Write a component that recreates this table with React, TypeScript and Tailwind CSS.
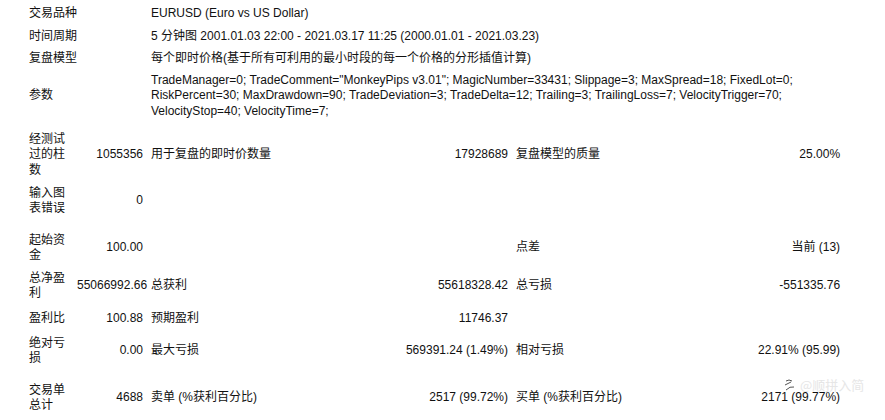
import React from 'react';

type Row = {
  h: number;
  cells: { text?: string; span?: number; right?: boolean }[];
};

const rows: Row[] = [
  { h: 22, cells: [{ text: '交易品种', span: 2 }, { text: 'EURUSD (Euro vs US Dollar)', span: 4 }] },
  { h: 23, cells: [{ text: '时间周期', span: 2 }, { text: '5 分钟图 2001.01.03 22:00 - 2021.03.17 11:25 (2000.01.01 - 2021.03.23)', span: 4 }] },
  { h: 22, cells: [{ text: '复盘模型', span: 2 }, { text: '每个即时价格(基于所有可利用的最小时段的每一个价格的分形插值计算)', span: 4 }] },
  {
    h: 52,
    cells: [
      { text: '参数', span: 2 },
      {
        text: 'TradeManager=0; TradeComment="MonkeyPips v3.01"; MagicNumber=33431; Slippage=3; MaxSpread=18; FixedLot=0; RiskPercent=30; MaxDrawdown=90; TradeDeviation=3; TradeDelta=12; Trailing=3; TrailingLoss=7; VelocityTrigger=70; VelocityStop=40; VelocityTime=7;',
        span: 4,
      },
    ],
  },
  { h: 6, cells: [] },
  { h: 54, cells: [{ text: '经测试过的柱数' }, { text: '1055356', right: true }, { text: '用于复盘的即时价数量' }, { text: '17928689', right: true }, { text: '复盘模型的质量' }, { text: '25.00%', right: true }] },
  { h: 38, cells: [{ text: '输入图表错误' }, { text: '0', right: true }, {}, {}, {}, {}] },
  { h: 9, cells: [] },
  { h: 38, cells: [{ text: '起始资金' }, { text: '100.00', right: true }, {}, {}, { text: '点差' }, { text: '当前 (13)', right: true }] },
  { h: 38, cells: [{ text: '总净盈利' }, { text: '55066992.66', right: true }, { text: '总获利' }, { text: '55618328.42', right: true }, { text: '总亏损' }, { text: '-551335.76', right: true }] },
  { h: 27, cells: [{ text: '盈利比' }, { text: '100.88', right: true }, { text: '预期盈利' }, { text: '11746.37', right: true }, {}, {}] },
  { h: 38, cells: [{ text: '绝对亏损' }, { text: '0.00', right: true }, { text: '最大亏损' }, { text: '569391.24 (1.49%)', right: true }, { text: '相对亏损' }, { text: '22.91% (95.99)', right: true }] },
  { h: 9, cells: [] },
  { h: 38, cells: [{ text: '交易单总计' }, { text: '4688', right: true }, { text: '卖单 (%获利百分比)' }, { text: '2517 (99.72%)', right: true }, { text: '买单 (%获利百分比)' }, { text: '2171 (99.77%)', right: true }] },
];

export default function App() {
  return (
    <div className="relative h-[420px] w-[885px] overflow-hidden bg-white pt-[3px] pl-[25px] text-[12px] leading-[15.5px] text-[#111] [font-family:'Liberation_Sans','Noto_Sans_CJK_SC',sans-serif]">
      <table className="w-[819px] table-fixed border-collapse">
        <colgroup>
          <col className="w-[48px]" />
          <col className="w-[74px]" />
          <col className="w-[150px]" />
          <col className="w-[215px]" />
          <col className="w-[150px]" />
          <col className="w-[182px]" />
        </colgroup>
        <tbody>
          {rows.map((row, i) => (
            <tr key={i} style={{ height: row.h }}>
              {row.cells.length === 0 ? (
                <td colSpan={6} className="p-0" />
              ) : (
                row.cells.map((c, j) => (
                  <td
                    key={j}
                    colSpan={c.span ?? 1}
                    className={`px-[4px] py-0 align-middle ${c.right ? 'text-right whitespace-nowrap' : 'text-left'}`}
                  >
                    {c.text}
                  </td>
                ))
              )}
            </tr>
          ))}
        </tbody>
      </table>

      {/* watermark */}
      <div className="absolute left-[783px] top-[377px] flex items-center gap-[3px] text-[13px] text-[#e6e6e6]">
        <svg width="14" height="14" viewBox="0 0 14 14" className="text-[#555]">
          <path d="M3 3 Q6 1 9 3 M2 7 L8 4 M3 12 Q7 8 11 9" fill="none" stroke="currentColor" strokeWidth="1" />
        </svg>
        <span className="[font-family:'Noto_Sans_CJK_SC',sans-serif]">@顺拼入简</span>
      </div>
    </div>
  );
}
